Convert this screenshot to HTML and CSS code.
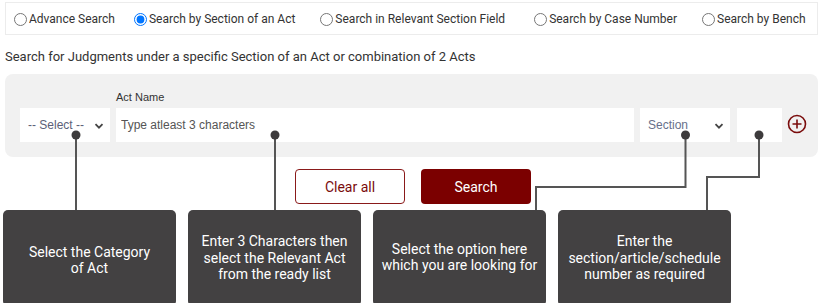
FILE: index.html
```html
<!DOCTYPE html>
<html lang="en">
<head>
    <meta charset="UTF-8">
    <meta name="viewport" content="width=device-width, initial-scale=1.0">
    <title>Search by Section of an Act</title>
    <link rel="stylesheet" href="styles.css">
</head>
<body>
    <div id="page">
        <div class="search-types">
            <label><input type="radio" name="type"> Advance Search</label>
            <label><input type="radio" name="type" checked> Search by Section of an Act</label>
            <label><input type="radio" name="type"> Search in Relevant Section Field</label>
            <label><input type="radio" name="type"> Search by Case Number</label>
            <label><input type="radio" name="type"> Search by Bench</label>
        </div>

        <p class="intro">Search for Judgments under a specific Section of an Act or combination of 2 Acts</p>

        <div class="act-panel">
            <div class="select-box category">
                <select><option>-- Select --</option></select>
                <svg class="chevron" width="10" height="6" viewBox="0 0 10 6"><path d="M1.5 1.2l3.5 3.5 3.5-3.5" fill="none" stroke="#444" stroke-width="1.8"/></svg>
            </div>
            <div class="act-field">
                <span class="field-label">Act Name</span>
                <input type="text" placeholder="Type atleast 3 characters">
            </div>
            <div class="select-box section">
                <select><option>Section</option></select>
                <svg class="chevron" width="10" height="6" viewBox="0 0 10 6"><path d="M1.5 1.2l3.5 3.5 3.5-3.5" fill="none" stroke="#444" stroke-width="1.8"/></svg>
            </div>
            <input type="text" class="section-number">
            <svg class="add-icon" width="20" height="20" viewBox="0 0 20 20">
                <circle cx="10" cy="10" r="8.5" fill="none" stroke="#7a0c0c" stroke-width="1.6"/>
                <path d="M10 5.5v9M5.5 10h9" stroke="#7a0c0c" stroke-width="1.6"/>
            </svg>
        </div>

        <div class="actions">
            <button type="button" class="btn-outline">Clear all</button>
            <button type="button" class="btn-primary">Search</button>
        </div>

        <div class="hints">
            <div class="hint hint-low">Select the Category<br>of Act</div>
            <div class="hint">Enter 3 Characters then select the Relevant Act from the ready list</div>
            <div class="hint hint-high">Select the option here which you are looking for</div>
            <div class="hint">Enter the section/article/schedule number as required</div>
        </div>
    </div>

    <svg class="connectors" width="823" height="303" viewBox="0 0 823 303">
        <g fill="none" stroke="#555" stroke-width="2">
            <path d="M76 135V210"/>
            <path d="M275 135V210"/>
            <path d="M685.5 135V187H536V210"/>
            <path d="M759 135V177H707V210"/>
        </g>
        <g fill="#3d3b3c">
            <circle cx="76" cy="135" r="4.5"/>
            <circle cx="275" cy="135" r="4.5"/>
            <circle cx="685.5" cy="135" r="4.5"/>
            <circle cx="759" cy="135" r="4.5"/>
        </g>
    </svg>
</body>
</html>
```

FILE: styles.css
```css
body {
    margin: 0;
    font-family: 'Roboto', 'Liberation Sans', sans-serif;
    color: #333;
    background-color: #fff;
    position: relative;
    height: 303px;
    overflow: hidden;
}
#page {
    padding-top: 2px;
}
.search-types {
    margin: 0 5px;
    height: 33px;
    box-sizing: border-box;
    border: 1px solid #ececec;
    display: flex;
    align-items: center;
    padding: 1px 0 0 8px;
    font-size: 12px;
}
.search-types label {
    display: flex;
    align-items: center;
    flex-shrink: 0;
    white-space: nowrap;
    cursor: pointer;
    margin-right: 25px;
}
.search-types label:first-child {
    margin-right: 19px;
}
.search-types label:nth-child(3) {
    margin-right: 29px;
}
.search-types label:last-child {
    margin-right: 0;
}
.search-types input {
    margin: 0 2px 0 0;
    width: 13px;
    height: 13px;
}
.intro {
    margin: 14px 5px 0;
    font-size: 13px;
    line-height: 16px;
}
.act-panel {
    margin: 9px 5px 0;
    background-color: #f1f1f1;
    border-radius: 8px;
    padding: 17px 11px 15px 15px;
    display: flex;
    align-items: flex-end;
}
.select-box {
    position: relative;
    height: 34px;
}
.select-box select {
    appearance: none;
    -webkit-appearance: none;
    height: 34px;
    width: 100%;
    border: none;
    background-color: #fff;
    font-family: 'Liberation Sans', Arial, sans-serif;
    font-size: 12px;
    padding: 0 8px;
}
.select-box .chevron {
    position: absolute;
    right: 6px;
    top: 15px;
    pointer-events: none;
}
.category {
    width: 90px;
    margin-right: 6px;
}
.category select {
    color: #5c5f78;
}
.section {
    width: 90px;
    margin: 0 7px 0 6px;
}
.section select {
    color: #68708a;
}
.act-field {
    flex: 1;
    display: flex;
    flex-direction: column;
}
.field-label {
    font-family: 'Liberation Sans', Arial, sans-serif;
    font-size: 11px;
    line-height: 13px;
    color: #333;
    margin-bottom: 4px;
}
.act-field input,
.section-number {
    height: 34px;
    box-sizing: border-box;
    border: none;
    background-color: #fff;
    font-family: 'Liberation Sans', Arial, sans-serif;
    font-size: 12px;
    padding: 0 5px;
}
.act-field input::placeholder {
    color: #555;
}
.section-number {
    width: 45px;
    margin-right: 5px;
}
.add-icon {
    margin-bottom: 8px;
}
.actions {
    margin-top: 12px;
    display: flex;
    justify-content: center;
    gap: 16px;
    padding-left: 3px;
}
.actions button {
    width: 110px;
    height: 35px;
    border-radius: 4px;
    font-family: 'Roboto', sans-serif;
    font-size: 14px;
    cursor: pointer;
}
.btn-outline {
    background-color: #fff;
    border: 1px solid #8a1a1a;
    color: #7a0c0c;
}
.btn-primary {
    background-color: #7b0000;
    border: none;
    color: #fff;
}
.hints {
    margin: 6px 0 0 3px;
    display: flex;
    gap: 12px;
}
.hint {
    width: 173px;
    height: 96px;
    box-sizing: border-box;
    padding: 0 4px;
    background-color: #434142;
    border-radius: 5px;
    color: #fff;
    font-size: 14px;
    line-height: 16.5px;
    display: flex;
    align-items: center;
    justify-content: center;
    text-align: center;
}
.hint-low {
    padding-top: 4px;
}
.hint-high {
    padding-bottom: 2px;
}
.connectors {
    position: absolute;
    top: 0;
    left: 0;
    pointer-events: none;
}
```
